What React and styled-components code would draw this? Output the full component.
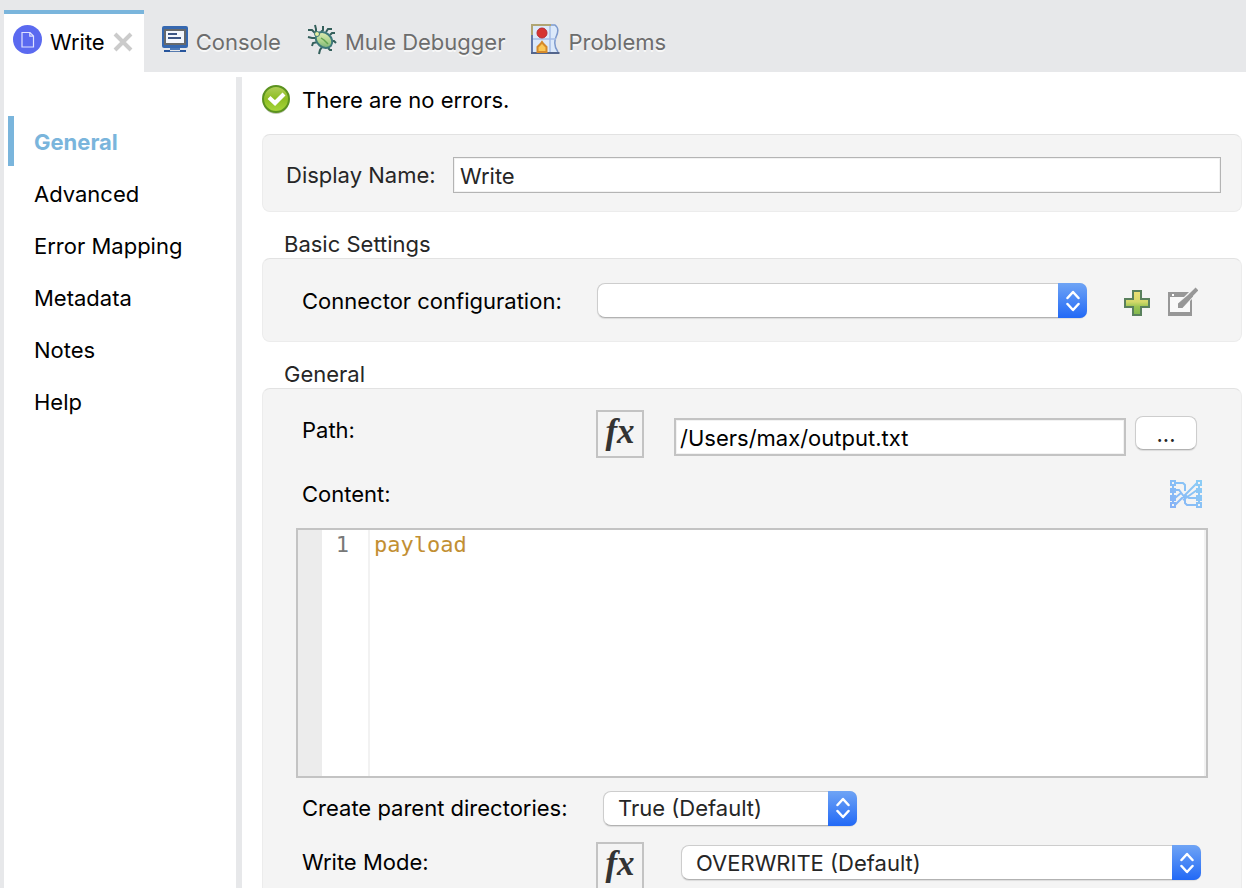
import React, { useState } from "react";
import styled, { createGlobalStyle, css } from "styled-components";

const GlobalStyle = createGlobalStyle`
  *, *::before, *::after { box-sizing: border-box; }
  body {
    margin: 0;
    background: #ffffff;
    color: #000000;
    font-family: Inter, "Liberation Sans", sans-serif;
    font-size: 22px;
    line-height: 28px;
  }
  button, input, select, textarea { font: inherit; color: inherit; margin: 0; }
`;

const Page = styled.div`
  display: flex;
  flex-direction: column;
  height: 100vh;
  overflow: hidden;
  border-left: 4px solid #e7e8ea;
`;

const TabBar = styled.div`
  display: flex;
  flex: none;
  height: 72px;
  padding-top: 10px;
  background: #e7e8ea;
`;

const Tab = styled.button`
  display: flex;
  align-items: center;
  gap: 8px;
  padding: 0 8px 2px 18px;
  border: 0;
  border-top: 4px solid transparent;
  background: transparent;
  color: #6d6d6d;
  text-shadow: 0 2px 0 #f8f8f8;
  white-space: nowrap;

  ${(p) =>
    p.$active &&
    css`
      padding: 0 11px 2px 9px;
      border-top-color: #7ab5dc;
      background: #ffffff;
      color: #000000;
      text-shadow: none;
    `}

  svg { flex: none; }
  svg:first-child { margin-bottom: 6px; }
`;

const Body = styled.div`
  display: flex;
  flex: 1;
  min-height: 0;
`;

const Sidebar = styled.nav`
  display: flex;
  flex: none;
  flex-direction: column;
  gap: 2px;
  width: 232px;
  padding: 44px 4px 0;
`;

const SideLink = styled.a`
  display: flex;
  align-items: center;
  height: 50px;
  padding: 2px 0 0 20px;
  border-left: 6px solid ${(p) => (p.$active ? "#7ab5dc" : "transparent")};
  color: ${(p) => (p.$active ? "#7ab5dc" : "#000000")};
  font-weight: ${(p) => (p.$active ? 700 : 400)};
  text-decoration: none;
`;

const Splitter = styled.div`
  flex: none;
  width: 6px;
  margin-top: 5px;
  background: #e7e8ea;
`;

const Main = styled.main`
  flex: 1;
  min-width: 0;
  padding: 10px 4px 0 20px;
  overflow-y: auto;
  scrollbar-width: none;
`;

const Status = styled.p`
  display: flex;
  align-items: center;
  gap: 12px;
  height: 36px;
  margin: 0 0 16px;
`;

const Panel = styled.section`
  padding: ${(p) => p.$pad};
  border: 1px solid #ececec;
  border-top-color: #e2e2e2;
  border-radius: 8px;
  background: #f4f4f4;
`;

const Heading = styled.h2`
  margin: 18px 0 0 22px;
  color: #262626;
  font-size: 22px;
  font-weight: 400;
  line-height: 28px;
`;

const Row = styled.div`
  display: flex;
  align-items: ${(p) => p.$align || "center"};
  height: ${(p) => p.$height};
  padding: ${(p) => p.$top || "0"} ${(p) => p.$right || "7px"} 0 6px;
`;

const Label = styled.label`
  flex: none;
  width: ${(p) => p.$width || "294px"};
  color: ${(p) => (p.$soft ? "#262626" : "#000000")};
  white-space: nowrap;
`;

const TextInput = styled.input`
  flex: 1;
  min-width: 0;
  height: ${(p) => (p.$heavy ? "38px" : "36px")};
  padding: ${(p) => (p.$heavy ? "2px 4px 0" : "2px 6px 0")};
  border: ${(p) => (p.$heavy ? "2px solid #c3c3c3" : "1px solid #b4b4b4")};
  border-radius: 0;
  background: #ffffff;
  color: ${(p) => (p.$heavy ? "#000000" : "#262626")};
  box-shadow: inset 0 0 0 1px #f2f2f2;
  outline: none;
`;

const SelectBox = styled.div`
  display: grid;
  grid-template-columns: 1fr 29px;
  flex: ${(p) => (p.$width ? "none" : "1")};
  width: ${(p) => p.$width || "auto"};
  min-width: 0;
  height: 35px;
  margin: ${(p) => p.$top || "0"} 0 0 ${(p) => p.$left || "0"};
`;

const NativeSelect = styled.select`
  grid-area: 1 / 1 / 2 / 3;
  min-width: 0;
  height: 35px;
  padding: 0 36px 0 14px;
  border: 1px solid #cdcdcd;
  border-bottom-color: #b2b2b2;
  border-radius: 8px;
  background: #ffffff;
  color: #262626;
  box-shadow: 0 1px 1px rgba(0, 0, 0, 0.1);
  appearance: none;
  outline: none;
`;

const Stepper = styled.span`
  display: flex;
  grid-area: 1 / 2 / 2 / 3;
  align-items: center;
  justify-content: center;
  z-index: 1;
  border-radius: 0 7px 7px 0;
  background: linear-gradient(#6fa4f5, #2269f6);
  pointer-events: none;
`;

const IconButton = styled.button`
  display: flex;
  flex: none;
  padding: 0;
  border: 0;
  background: none;
`;

const Actions = styled.div`
  display: flex;
  align-items: center;
  gap: 18px;
  margin-left: auto;
  padding-left: 37px;
`;

const FxButton = styled.button`
  flex: none;
  width: 48px;
  height: 48px;
  padding: 0 0 4px;
  border: 2px solid #c3c3c3;
  background: #f4f4f4;
  color: #333333;
  font-family: "Liberation Serif", serif;
  font-size: 35px;
  font-style: italic;
  font-weight: 700;
  line-height: 40px;
`;

const BrowseButton = styled.button`
  flex: none;
  width: 62px;
  height: 34px;
  margin: 6px 0 0 9px;
  padding: 2px 0 0;
  border: 1px solid #cdcdcd;
  border-bottom-color: #b2b2b2;
  border-radius: 8px;
  background: #ffffff;
  color: #262626;
  box-shadow: 0 1px 1px rgba(0, 0, 0, 0.1);
`;

const PathField = styled.div`
  display: flex;
  flex: 1;
  min-width: 0;
  margin: 8px 0 0 30px;
`;

const TopLabel = styled(Label)`
  padding-top: 6px;
`;

const Editor = styled.div`
  display: flex;
  height: 250px;
  margin-top: 6px;
  border: 2px solid #c3c3c3;
  background: #ffffff;
  box-shadow: inset -2px 0 0 #f2f2f2;
  font-family: "DejaVu Sans Mono", monospace;
  font-size: 22px;
  line-height: 30px;
`;

const Gutter = styled.div`
  flex: none;
  width: 24px;
  background: #ececec;
`;

const LineNumbers = styled.div`
  flex: none;
  width: 48px;
  padding-right: 19px;
  border-right: 2px solid #f2f2f2;
  color: #787878;
  text-align: right;
`;

const Code = styled.textarea`
  flex: 1;
  min-width: 0;
  padding: 0 4px;
  border: 0;
  background: transparent;
  color: #c28f33;
  outline: none;
  resize: none;
`;

const WriteIcon = () => (
  <svg width="29" height="29" viewBox="0 0 29 29" aria-hidden="true">
    <circle cx="14.500" cy="14.500" r="14.500" fill="#5b6af0" />
    <path d="M9 7.500h8l3.500 3.500v11H9zM16.800 7.500v3.700h3.700" fill="none" stroke="#dfe2ff" strokeWidth="1.200" />
  </svg>
);

const CloseIcon = () => (
  <svg width="20" height="20" viewBox="0 0 20 20" aria-hidden="true">
    <path d="M2 2l16 16M18 2L2 18" stroke="#cbcbcb" strokeWidth="4" />
  </svg>
);

const ConsoleIcon = () => (
  <svg width="26" height="28" viewBox="0 0 26 28" aria-hidden="true">
    <rect x="0" y="1" width="26" height="22" rx="2" fill="#3668b0" />
    <rect x="2" y="4" width="22" height="16" fill="#66696c" />
    <rect x="4" y="6" width="18" height="12" fill="#f4f7fd" />
    <path d="M6 9h9M6 13h13" stroke="#3c5685" strokeWidth="2" />
    <path d="M8 23h10v2H8z" fill="#4c78b6" />
    <path d="M2 25h6v1.200h10V25h6v2H2z" fill="#27559c" />
  </svg>
);

const BugIcon = () => (
  <svg width="30" height="32" viewBox="0 0 30 32" aria-hidden="true">
    <defs>
      <linearGradient id="bug" x1="0" y1="0" x2="1" y2="1">
        <stop offset="0" stopColor="#f1f6c2" />
        <stop offset="0.600" stopColor="#a6cf88" />
        <stop offset="1" stopColor="#5f9f72" />
      </linearGradient>
    </defs>
    <path
      d="M9 10V6L8 2M14 9l2-2V3M8 10L5 7H1M19 9l2-3h4M23 12l2-2h3M25 18h2l2 2M10 15H5l-4-1M11 19l-5 1-1 3M15 24l-2 3-1 4M21 25l2 2h2"
      fill="none"
      stroke="#345f5b"
      strokeWidth="2"
    />
    <ellipse cx="17" cy="17" rx="9" ry="7" transform="rotate(40 17 17)" fill="url(#bug)" stroke="#3d787a" strokeWidth="2" />
    <circle cx="10" cy="11" r="2.500" fill="#e6eda0" stroke="#3d787a" />
    <path d="M14 15l3 2 4 4" fill="none" stroke="#61a350" strokeWidth="1.500" />
  </svg>
);

const ProblemsIcon = () => (
  <svg width="29" height="32" viewBox="0 0 29 32" aria-hidden="true">
    <path d="M1 1h23c4 3 4 8 1 13-2 5-1 11 3 16H1z" fill="#dce9fa" />
    <path d="M19 2h5c4 3 3 8 1 12-2 5-1 11 2 15" fill="none" stroke="#7d99cc" strokeWidth="1.500" />
    <path d="M1 16h24M19 2v28" stroke="#a5bde8" strokeWidth="1.500" />
    <path d="M1 30V9" stroke="#6378a8" strokeWidth="2" />
    <path d="M1 12V2h19" fill="none" stroke="#b0a573" strokeWidth="2" />
    <path d="M0 30h28.500" stroke="#53658c" strokeWidth="2" />
    <circle cx="11" cy="10" r="5" fill="#d63432" stroke="#b82a35" />
    <path d="M6.500 29v-5l3-3 1.500-2 1.500 2 3 3v5z" fill="#fbc858" stroke="#d58a2b" strokeWidth="2" />
  </svg>
);

const OkIcon = () => (
  <svg width="28" height="32" viewBox="0 0 28 32" aria-hidden="true">
    <defs>
      <linearGradient id="ok" x1="0" y1="0" x2="0" y2="1">
        <stop offset="0" stopColor="#b2cf5b" />
        <stop offset="0.500" stopColor="#8dbd22" />
        <stop offset="1" stopColor="#a9d83b" />
      </linearGradient>
    </defs>
    <ellipse cx="14" cy="17" rx="13" ry="13" fill="#c3c8bb" />
    <circle cx="14" cy="15" r="13" fill="url(#ok)" stroke="#5b921f" strokeWidth="2" />
    <path d="M7 13.500l6 5.500 9-9" fill="none" stroke="#ffffff" strokeWidth="4.200" />
  </svg>
);

const ArrowsIcon = () => (
  <svg width="14" height="22" viewBox="0 0 14 22" aria-hidden="true">
    <path
      d="M1.500 8L7 2l5.500 6M1.500 14L7 20l5.500-6"
      fill="none"
      stroke="#ffffff"
      strokeWidth="2.500"
      strokeLinecap="round"
      strokeLinejoin="round"
    />
  </svg>
);

const PlusIcon = () => (
  <svg width="26" height="30" viewBox="0 0 26 30" aria-hidden="true">
    <defs>
      <linearGradient id="plus" x1="0" y1="0" x2="0" y2="1">
        <stop offset="0" stopColor="#ecdf75" />
        <stop offset="0.450" stopColor="#d4d96a" />
        <stop offset="0.650" stopColor="#9cc653" />
        <stop offset="1" stopColor="#7fb64d" />
      </linearGradient>
    </defs>
    <path d="M9 5h8v8h8v8h-8v8H9v-8H1v-8h8z" fill="url(#plus)" stroke="#59805c" strokeWidth="2" />
  </svg>
);

const EditIcon = () => (
  <svg width="30" height="30" viewBox="0 0 30 30" aria-hidden="true">
    <path d="M1 7h22v22H1z" fill="#f9f9f9" stroke="#979797" strokeWidth="2" />
    <path d="M0 6h22v5H0zM0 26h24v4H0z" fill="#979797" />
    <path d="M4 8h2v2H4z" fill="#ffffff" />
    <path d="M14 18L27 5" stroke="#f4f4f4" strokeWidth="7" />
    <path d="M11 21v-3L24 7v3L14 21z" fill="#979797" stroke="#979797" strokeWidth="2" />
    <path d="M22 10l7-7" stroke="#979797" strokeWidth="4" />
  </svg>
);

const MappingIcon = () => (
  <svg width="32" height="28" viewBox="0 0 32 28" aria-hidden="true">
    <defs>
      <linearGradient id="map" gradientUnits="userSpaceOnUse" x1="0" y1="28" x2="32" y2="0">
        <stop offset="0" stopColor="#86b1f6" />
        <stop offset="1" stopColor="#8ccef6" />
      </linearGradient>
    </defs>
    <g fill="none" stroke="url(#map)" strokeWidth="2">
      <path d="M5 3h8l2 2v6M27 3L5 25M5 10h4l6 8v5l2 2h10M27 10L13 20M27 18h-8l-4-3M5 18l6-5" />
      <path d="M1 1h4v4H1zM1 9h4v3H1zM1 16h4v4H1zM1 23h4v4H1zM27 1h4v4h-4zM27 9h4v3h-4zM27 16h4v4h-4zM27 23h4v4h-4zM3 5v18M29 5v18" />
    </g>
  </svg>
);

const Select = ({ id, options, width, left, top }) => (
  <SelectBox $width={width} $left={left} $top={top}>
    <NativeSelect id={id} defaultValue={options[0]}>
      {options.map((option) => (
        <option key={option} value={option}>
          {option}
        </option>
      ))}
    </NativeSelect>
    <Stepper>
      <ArrowsIcon />
    </Stepper>
  </SelectBox>
);

const TABS = [
  { name: "Write", Icon: WriteIcon },
  { name: "Console", Icon: ConsoleIcon },
  { name: "Mule Debugger", Icon: BugIcon },
  { name: "Problems", Icon: ProblemsIcon },
];

const SECTIONS = ["General", "Advanced", "Error Mapping", "Metadata", "Notes", "Help"];

export default function App() {
  const [section, setSection] = useState("General");

  return (
    <Page>
      <GlobalStyle />
      <TabBar role="tablist">
        {TABS.map(({ name, Icon }, index) => (
          <Tab key={name} type="button" role="tab" aria-selected={index === 0} $active={index === 0}>
            <Icon />
            {name}
            {index === 0 && <CloseIcon />}
          </Tab>
        ))}
      </TabBar>
      <Body>
        <Sidebar aria-label="Properties">
          {SECTIONS.map((name) => (
            <SideLink key={name} href="#" $active={name === section} onClick={() => setSection(name)}>
              {name}
            </SideLink>
          ))}
        </Sidebar>
        <Splitter />
        <Main>
          <Status>
            <OkIcon />
            There are no errors.
          </Status>

          <Panel $pad="22px 20px 18px 17px">
            <Row $height="36px" $right="0">
              <Label $soft $width="167px" htmlFor="display-name">
                Display Name:
              </Label>
              <TextInput id="display-name" defaultValue="Write" />
            </Row>
          </Panel>

          <Heading>Basic Settings</Heading>
          <Panel $pad="24px 33px 23px">
            <Row $height="35px" $right="10px">
              <Label htmlFor="connector">Connector configuration:</Label>
              <Select id="connector" options={[""]} left="1px" />
              <Actions>
                <IconButton type="button" aria-label="Add configuration">
                  <PlusIcon />
                </IconButton>
                <IconButton type="button" aria-label="Edit configuration">
                  <EditIcon />
                </IconButton>
              </Actions>
            </Row>
          </Panel>

          <Heading>General</Heading>
          <Panel $pad="21px 33px 24px">
            <Row $height="56px" $align="flex-start" $right="11px">
              <TopLabel htmlFor="path">Path:</TopLabel>
              <FxButton type="button">fx</FxButton>
              <PathField>
                <TextInput $heavy id="path" defaultValue="/Users/max/output.txt" />
              </PathField>
              <BrowseButton type="button">...</BrowseButton>
            </Row>
            <Row $height="56px" $right="6px">
              <Label htmlFor="content">Content:</Label>
              <Actions>
                <IconButton type="button" aria-label="Show mapping">
                  <MappingIcon />
                </IconButton>
              </Actions>
            </Row>
            <Editor>
              <Gutter />
              <LineNumbers>1</LineNumbers>
              <Code id="content" spellCheck={false} defaultValue="payload" />
            </Editor>
            <Row $height="60px">
              <Label htmlFor="create-dirs">Create parent directories:</Label>
              <Select id="create-dirs" options={["True (Default)", "False"]} width="254px" left="7px" />
            </Row>
            <Row $height="52px" $align="flex-start" $top="4px">
              <TopLabel htmlFor="write-mode">Write Mode:</TopLabel>
              <FxButton type="button">fx</FxButton>
              <Select id="write-mode" options={["OVERWRITE (Default)", "APPEND", "CREATE_NEW"]} left="37px" top="3px" />
            </Row>
          </Panel>
        </Main>
      </Body>
    </Page>
  );
}
